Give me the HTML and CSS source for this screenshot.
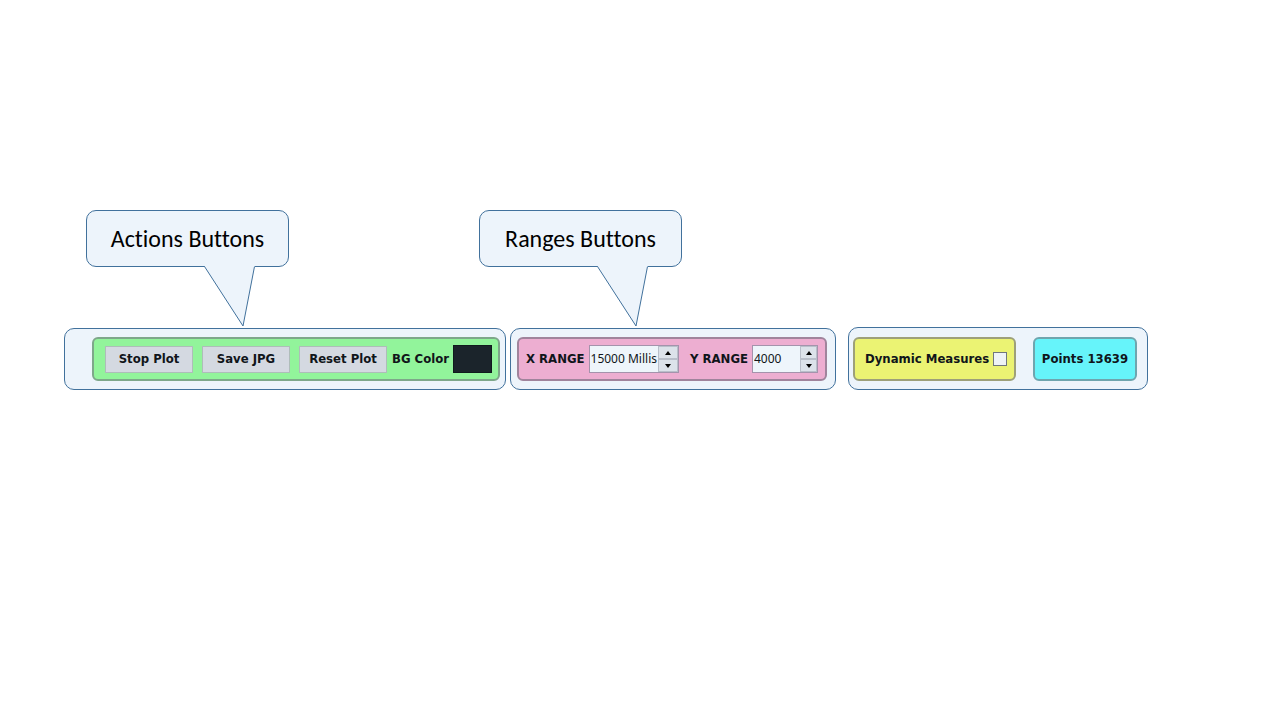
FILE: index.html
```html
<!DOCTYPE html>
<html lang="en">
<head>
<meta charset="utf-8">
<meta name="viewport" content="width=device-width, initial-scale=1">
<title>Plot toolbar</title>
<link rel="stylesheet" href="styles.css">
</head>
<body>
<main class="slide">
  <div class="callouts">
    <div class="callout">Actions Buttons
      <svg class="tail" width="54" height="62" viewBox="0 0 54 62" aria-hidden="true"><path d="M1 0H52V3H3Z" fill="#edf4fb"/><path d="M1.500 1.500L40 61L51.500 1.500" fill="#edf4fb" stroke="#41719c"/></svg>
    </div>
    <div class="callout">Ranges Buttons
      <svg class="tail" width="54" height="62" viewBox="0 0 54 62" aria-hidden="true"><path d="M1 0H52V3H3Z" fill="#edf4fb"/><path d="M1.500 1.500L40 61L51.500 1.500" fill="#edf4fb" stroke="#41719c"/></svg>
    </div>
  </div>
  <div class="toolbar">
    <section class="frame frame-actions">
      <div class="box actions">
        <button class="action" type="button">Stop Plot</button>
        <button class="action" type="button">Save JPG</button>
        <button class="action" type="button">Reset Plot</button>
        <div class="pair">
          <label for="bg">BG Color</label>
          <button class="swatch" id="bg" type="button"></button>
        </div>
      </div>
    </section>
    <section class="frame frame-ranges">
      <div class="box ranges">
        <div class="pair">
          <label for="xr">X RANGE</label>
          <div class="spin spin-x">
            <input id="xr" type="text" value="15000 Millis">
            <div class="steps">
              <button type="button" aria-label="Increase X range"><svg width="8" height="4" viewBox="0 0 8 4"><path d="M1 4L4 0L7 4Z"/></svg></button>
              <button type="button" aria-label="Decrease X range"><svg width="8" height="4" viewBox="0 0 8 4"><path d="M1 0H7L4 4Z"/></svg></button>
            </div>
          </div>
        </div>
        <div class="pair">
          <label for="yr">Y RANGE</label>
          <div class="spin spin-y">
            <input id="yr" type="text" value="4000">
            <div class="steps">
              <button type="button" aria-label="Increase Y range"><svg width="8" height="4" viewBox="0 0 8 4"><path d="M1 4L4 0L7 4Z"/></svg></button>
              <button type="button" aria-label="Decrease Y range"><svg width="8" height="4" viewBox="0 0 8 4"><path d="M1 0H7L4 4Z"/></svg></button>
            </div>
          </div>
        </div>
      </div>
    </section>
    <section class="frame frame-status">
      <div class="box measures">
        <label for="dm">Dynamic Measures</label>
        <input class="check" id="dm" type="checkbox">
      </div>
      <div class="box points">Points 13639</div>
    </section>
  </div>
</main>
</body>
</html>
```
FILE: styles.css
```css
* { box-sizing: border-box; }
body {
  margin: 0;
  background: #fff;
  color: #10151a;
  font: bold 13px/16px "DejaVu Sans Condensed", "Noto Sans", sans-serif;
}
button, input { font: inherit; color: inherit; margin: 0; padding: 0; border-radius: 0; }
.slide { padding: 210px 64px 0; }
.callouts { display: flex; gap: 190px; padding-left: 22px; }
.callout {
  position: relative;
  width: 203px;
  padding: 14px 0 13px;
  border: 1px solid #41719c;
  border-radius: 10px;
  background: #edf4fb;
  color: #000;
  font: 24px/28px "Carlito", "Open Sans", sans-serif;
  font-variant-ligatures: none;
  text-align: center;
}
.tail { position: absolute; left: 116px; top: 54px; }
.toolbar { display: flex; align-items: flex-end; margin-top: 60px; white-space: nowrap; }
.frame {
  display: flex;
  flex: none;
  padding: 8px;
  border: 1px solid #41719c;
  border-radius: 10px;
  background: #edf4fb;
}
.frame-actions { padding-left: 27px; padding-right: 6px; width: 442px; margin-right: 4px; }
.frame-ranges { padding-left: 6px; width: 326px; margin-right: 12px; }
.frame-status { padding: 9px 10px 8px 4px; width: 300px; justify-content: space-between; }
.box {
  display: flex;
  align-items: center;
  height: 44px;
  border: 2px solid #7f8f96;
  border-radius: 6px;
}
.actions { flex: 1; gap: 9px; padding: 0 6px 0 11px; background: #92f49b; border-color: #7ea78a; }
.action { width: 88px; height: 27px; border: 1px solid #aebdb9; background: #d4d9e1; }
.pair { display: flex; align-items: center; gap: 4px; }
.actions .pair { flex: 1; justify-content: space-between; margin-left: -4px; }
.swatch { width: 39px; height: 28px; border: 1px solid #101b1d; background: #1b242b; }
.ranges { flex: 1; justify-content: space-between; padding: 0 7px; background: #edaed1; border-color: #a0849c; }
.spin { display: flex; height: 28px; border: 1px solid #a493ac; background: #eef5fb; }
.spin-x { width: 90px; }
.spin-y { width: 66px; }
.spin input {
  flex: 1;
  min-width: 0;
  padding-left: 1px;
  border: 0;
  background: transparent;
  font: 12px/16px "Noto Sans", sans-serif;
}
.steps { display: flex; flex-direction: column; width: 20px; }
.spin-y .steps { width: 17px; }
.steps button {
  display: flex;
  flex: 1;
  align-items: center;
  justify-content: center;
  border: 1px solid #b9bfca;
  background: #dce2ea;
}
.measures { width: 163px; justify-content: space-between; padding: 0 7px 0 10px; background: #ebf373; border-color: #9da07a; }
.check { appearance: none; width: 14px; height: 14px; border: 1px solid #70777d; background: #eef3f5; }
.points { width: 104px; justify-content: center; background: #66f4fa; border-color: #6fa5ae; }
```
